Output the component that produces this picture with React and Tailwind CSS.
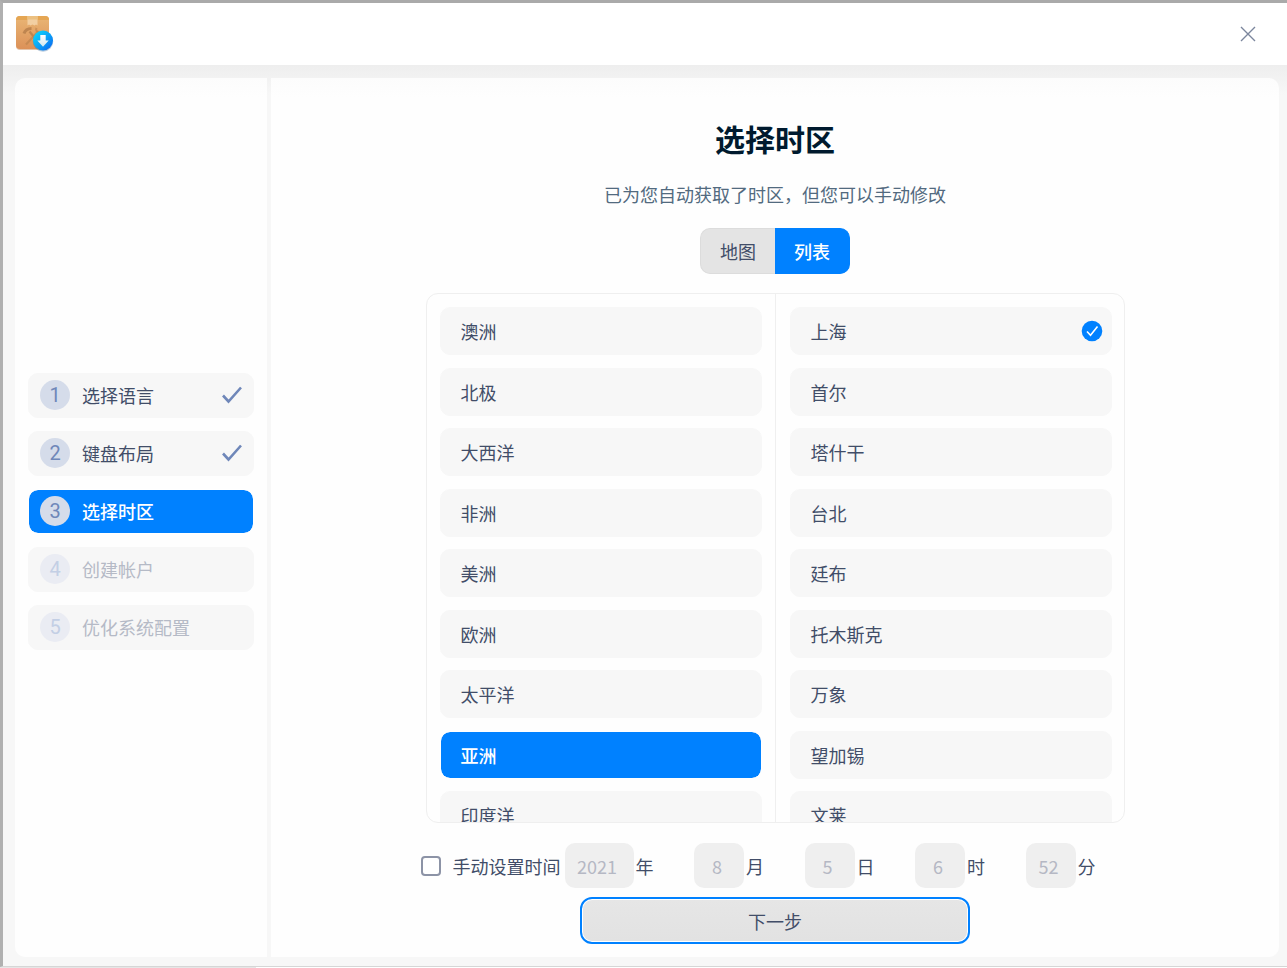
import { useState } from "react"

const steps = [
  { id: 1, label: "选择语言", status: "done" },
  { id: 2, label: "键盘布局", status: "done" },
  { id: 3, label: "选择时区", status: "active" },
  { id: 4, label: "创建帐户", status: "pending" },
  { id: 5, label: "优化系统配置", status: "pending" },
]

const regions = ["澳洲", "北极", "大西洋", "非洲", "美洲", "欧洲", "太平洋", "亚洲", "印度洋"]

const cities = ["上海", "首尔", "塔什干", "台北", "廷布", "托木斯克", "万象", "望加锡", "文莱"]

const timeFields = [
  { id: "month", value: "8", unit: "月" },
  { id: "day", value: "5", unit: "日" },
  { id: "hour", value: "6", unit: "时" },
  { id: "minute", value: "52", unit: "分" },
]

function AppIcon() {
  return (
    <svg width="40" height="40" viewBox="0 0 40 40" className="block">
      <defs>
        <linearGradient id="box" x1="0" y1="0" x2="0" y2="1">
          <stop offset="0" stopColor="#e9b675" />
          <stop offset="1" stopColor="#dc9158" />
        </linearGradient>
        <linearGradient id="badge" x1="0" y1="0" x2="1" y2="1">
          <stop offset="0" stopColor="#0be0fb" />
          <stop offset="0.5" stopColor="#0aa5f8" />
          <stop offset="1" stopColor="#0a5ff0" />
        </linearGradient>
        <linearGradient id="arrow" x1="0" y1="0" x2="0" y2="1">
          <stop offset="0" stopColor="#ffffff" />
          <stop offset="1" stopColor="#cfe6ee" />
        </linearGradient>
      </defs>
      <rect x="1" y="2" width="33" height="34" rx="4" fill="#c98a55" opacity="0.5" />
      <rect x="1" y="2" width="33" height="33" rx="4" fill="url(#box)" />
      <path d="M1 6a4 4 0 0 1 4-4h25a4 4 0 0 1 4 4z" fill="#e5a653" />
      <path d="M12.500 2h10v9.500l-1.500-1-1.500 1-2-1-2 1-1.500-1-1.500 1z" fill="#f2cfa2" />
      <path d="M12.500 2h10v3.500h-10z" fill="#ecc080" />
      {/* hammer and wrench */}
      <g fill="none" stroke="#b8804c" opacity="0.85">
        <path d="M9 19.500c1-3 4-5 7.500-5" strokeWidth="3" />
        <path d="M14.500 17.500l9 11" strokeWidth="2.200" />
        <path d="M11 30.500l12-13" strokeWidth="2" opacity="0.7" />
        <path d="M21.500 14c-1 2 0 4 2.500 4" strokeWidth="2" opacity="0.7" />
      </g>
      <circle cx="28" cy="27.500" r="10.200" fill="#3c6c9c" opacity="0.35" />
      <circle cx="28" cy="26.500" r="10" fill="url(#badge)" />
      <path d="M25.300 21h5.400v5.500h3L28 32.800l-5.700-6.300h3z" fill="url(#arrow)" />
    </svg>
  )
}

function StepItem({ step }) {
  const active = step.status === "active"
  const pending = step.status === "pending"

  return (
    <li
      aria-current={active ? "step" : undefined}
      className={`flex h-[45px] items-center rounded-[10px] border px-[11px] ${
        active
          ? "border-white bg-[#0081ff] bg-clip-padding font-medium text-white"
          : pending
          ? "border-[#f7f7f7] bg-[#f7f7f7] text-[#b5bac6]"
          : "border-[#f7f7f7] bg-[#f7f7f7] text-[#414d68]"
      }`}
    >
      <span
        className={`flex size-[30px] items-center justify-center rounded-full font-[Roboto,sans-serif] text-xl font-normal ${
          pending ? "bg-[#eaecf3] text-[#c3cfe5]" : "bg-[#d5dcea] text-[#6f87b9]"
        }`}
      >
        {step.id}
      </span>
      <span className="ml-3 flex-1">{step.label}</span>
      {step.status === "done" && (
        <svg width="20" height="18" viewBox="0 0 20 18" fill="none" stroke="#6f87b9" strokeWidth="2.600">
          <path d="M1 9.500l5.500 6L19 1.500" />
        </svg>
      )}
    </li>
  )
}

function ZoneList({ items, selected, onSelect, filled }) {
  return (
    <ul className="flex h-[532px] flex-1 flex-col justify-between">
      {items.map((item) => {
        const isSelected = item === selected
        return (
          <li key={item}>
            <button
              type="button"
              onClick={() => onSelect(item)}
              className={`flex h-12 w-full items-center justify-between rounded-[10px] border pl-5 pr-2 text-left ${
                isSelected && filled
                  ? "border-white bg-[#0081ff] bg-clip-padding font-medium text-white"
                  : "border-[#f7f7f7] bg-[#f7f7f7] text-[#414d68]"
              }`}
            >
              {item}
              {isSelected && !filled && (
                <svg width="22" height="22" viewBox="0 0 22 22" fill="none">
                  <circle cx="11" cy="11" r="10.300" fill="#0081ff" />
                  <path d="M6 11.500l3.500 3.700L16.500 6.500" stroke="#fff" strokeWidth="1.600" />
                </svg>
              )}
            </button>
          </li>
        )
      })}
    </ul>
  )
}

function TimeField({ id, value, unit, wide }) {
  return (
    <div className="flex items-center gap-0.5">
      <input
        id={id}
        type="text"
        disabled
        defaultValue={value}
        className={`h-[45px] rounded-[10px] bg-[#efefef] pr-1 text-center text-[#b5b8c4] ${
          wide ? "w-[69px]" : "w-[50px]"
        }`}
      />
      <label htmlFor={id}>{unit}</label>
    </div>
  )
}

export default function App() {
  const [mode, setMode] = useState("list")
  const [region, setRegion] = useState("亚洲")
  const [city, setCity] = useState("上海")
  const [manual, setManual] = useState(false)

  return (
    <div className="flex h-screen min-h-[700px] flex-col bg-white font-['Noto_Sans_CJK_SC',sans-serif] text-[18px] leading-6 text-[#414d68]">
      <div className="flex min-h-0 flex-1 flex-col border-b border-l-3 border-t-3 border-b-[#d6d6d6] border-l-[#b0b0b0] border-t-[#aaaaaa]">
        <header className="flex h-[62px] shrink-0 items-center justify-between bg-white pl-3 pr-[31px]">
          <AppIcon />
          <button type="button" aria-label="关闭" className="flex size-4 items-center justify-center">
            <svg width="16" height="16" viewBox="0 0 16 16" stroke="#7b869d" strokeWidth="1.400">
              <path d="M1 1l14 14M15 1L1 15" />
            </svg>
          </button>
        </header>

        <div className="flex min-h-0 flex-1 gap-1 bg-[linear-gradient(#eeeeee,#f7f7f7_30px)] pb-[9px] pl-3 pr-2 pt-[13px]">
          <nav className="flex w-[252px] flex-col justify-center rounded-l-[10px] bg-[linear-gradient(#fcfcfc,#fefefe_20px)] px-[13px] pb-[13px]">
            <ol className="flex flex-col gap-[13px]">
              {steps.map((step) => (
                <StepItem key={step.id} step={step} />
              ))}
            </ol>
          </nav>

          <main className="flex min-h-0 flex-1 flex-col items-center rounded-r-[10px] bg-[linear-gradient(#fcfcfc,#fefefe_20px)] pb-[13px] pt-[38px]">
            <h1 className="text-[30px] font-bold leading-[44px] text-[#001a2e]">选择时区</h1>
            <p className="mt-[22px] text-[#526a7f]">已为您自动获取了时区，但您可以手动修改</p>

            <div className="mt-[22px] flex h-[46px] shrink-0">
              <button
                type="button"
                onClick={() => setMode("map")}
                className={`w-[75px] rounded-l-[10px] border border-r-0 ${
                  mode === "map"
                    ? "border-[#0081ff] bg-[#0081ff] font-medium text-white"
                    : "border-[#dcdcdc] bg-[#e4e4e4]"
                }`}
              >
                地图
              </button>
              <button
                type="button"
                onClick={() => setMode("list")}
                className={`w-[75px] rounded-r-[10px] border border-l-0 ${
                  mode === "list"
                    ? "border-[#0081ff] bg-[#0081ff] font-medium text-white"
                    : "border-[#dcdcdc] bg-[#e4e4e4]"
                }`}
              >
                列表
              </button>
            </div>

            <div className="mt-[19px] flex h-0 w-[699px] max-w-full flex-1 overflow-hidden rounded-[12px] border border-[#efefef]">
              <div className="flex flex-1 border-r border-[#efefef] px-[13px] pt-[13px]">
                <ZoneList items={regions} selected={region} onSelect={setRegion} filled />
              </div>
              <div className="flex flex-1 pl-[14px] pr-3 pt-[13px]">
                <ZoneList items={cities} selected={city} onSelect={setCity} />
              </div>
            </div>

            <div className="mt-5 flex w-[709px] max-w-full shrink-0 items-center justify-between pr-[34px]">
              <div className="flex items-center gap-1">
                <label className="flex items-center gap-3">
                  <input
                    type="checkbox"
                    checked={manual}
                    onChange={(e) => setManual(e.target.checked)}
                    className="size-5 appearance-none rounded-[4px] border-2 border-[#8c93a6] bg-white checked:bg-[#0081ff]"
                  />
                  手动设置时间
                </label>
                <TimeField id="year" value="2021" unit="年" wide />
              </div>
              {timeFields.map((field) => (
                <TimeField key={field.id} {...field} />
              ))}
            </div>

            <button
              type="button"
              className="mt-[9px] h-[47px] w-[390px] max-w-full shrink-0 rounded-[12px] border-2 border-[#0081ff] bg-white p-px"
            >
              <span className="flex h-full items-center justify-center rounded-[9px] bg-linear-to-b from-[#e6e6e6] to-[#e2e2e2]">
                下一步
              </span>
            </button>
          </main>
        </div>
      </div>
      <div className="h-px w-64 shrink-0 bg-[#e6e6e6]" />
    </div>
  )
}
